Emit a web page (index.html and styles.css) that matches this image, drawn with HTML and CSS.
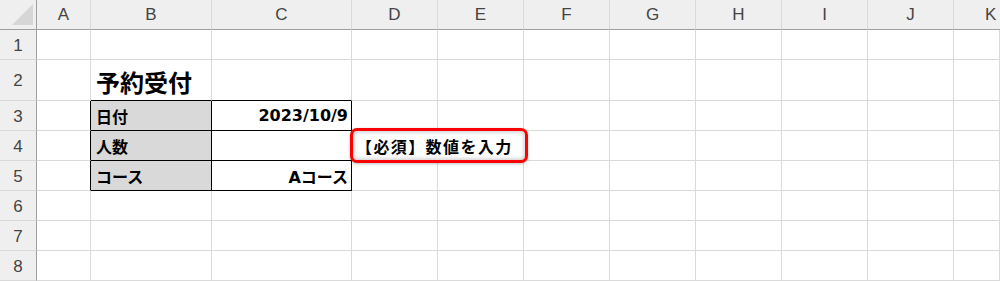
FILE: index.html
```html
<!DOCTYPE html>
<html lang="ja">
<head>
<meta charset="utf-8">
<link rel="stylesheet" href="styles.css">
</head>
<body>
<div class="sheet">
  <div class="corner"><span class="tri"></span></div>
  <div class="ch">A</div><div class="ch">B</div><div class="ch">C</div><div class="ch">D</div><div class="ch">E</div><div class="ch">F</div><div class="ch">G</div><div class="ch">H</div><div class="ch">I</div><div class="ch">J</div><div class="ch last">K</div>

  <div class="rh">1</div>
  <div class="c"></div><div class="c"></div><div class="c"></div><div class="c"></div><div class="c"></div><div class="c"></div><div class="c"></div><div class="c"></div><div class="c"></div><div class="c"></div><div class="c"></div>

  <div class="rh">2</div>
  <div class="c"></div><div class="c bb title">予約受付</div><div class="c bb"></div><div class="c"></div><div class="c"></div><div class="c"></div><div class="c"></div><div class="c"></div><div class="c"></div><div class="c"></div><div class="c"></div>

  <div class="rh">3</div>
  <div class="c br"></div><div class="c label">日付</div><div class="c value">2023/10/9</div><div class="c"></div><div class="c"></div><div class="c"></div><div class="c"></div><div class="c"></div><div class="c"></div><div class="c"></div><div class="c"></div>

  <div class="rh">4</div>
  <div class="c br"></div><div class="c label">人数</div><div class="c value"></div><div class="c"></div><div class="c"></div><div class="c"></div><div class="c"></div><div class="c"></div><div class="c"></div><div class="c"></div><div class="c"></div>

  <div class="rh">5</div>
  <div class="c br"></div><div class="c label">コース</div><div class="c value">Aコース</div><div class="c"></div><div class="c"></div><div class="c"></div><div class="c"></div><div class="c"></div><div class="c"></div><div class="c"></div><div class="c"></div>

  <div class="rh">6</div>
  <div class="c"></div><div class="c"></div><div class="c"></div><div class="c"></div><div class="c"></div><div class="c"></div><div class="c"></div><div class="c"></div><div class="c"></div><div class="c"></div><div class="c"></div>

  <div class="rh">7</div>
  <div class="c"></div><div class="c"></div><div class="c"></div><div class="c"></div><div class="c"></div><div class="c"></div><div class="c"></div><div class="c"></div><div class="c"></div><div class="c"></div><div class="c"></div>

  <div class="rh">8</div>
  <div class="c"></div><div class="c"></div><div class="c"></div><div class="c"></div><div class="c"></div><div class="c"></div><div class="c"></div><div class="c"></div><div class="c"></div><div class="c"></div><div class="c"></div>

  <div class="callout">【必須】数値を入力</div>
</div>
</body>
</html>
```

FILE: styles.css
```css
html, body {
  margin: 0;
  padding: 0;
  background: #ffffff;
  overflow: hidden;
}

.sheet {
  position: relative;
  display: grid;
  grid-template-columns: 37px 54px 121px 140px repeat(7, 86px) 46px;
  grid-template-rows: 30px 30px 41px 30px 30px 30px 30px 30px 30px;
  width: 1000px;
  height: 281px;
  overflow: hidden;
  font-family: "Noto Sans CJK JP", "Noto Sans", sans-serif;
}

.corner {
  position: relative;
  background: #efefef;
  border-right: 1px solid #9f9f9f;
  border-bottom: 1px solid #9f9f9f;
  box-sizing: border-box;
}

.tri {
  position: absolute;
  right: 3px;
  bottom: 4px;
  width: 0;
  height: 0;
  border-left: 21px solid transparent;
  border-bottom: 21px solid #d6d6d6;
}

.ch {
  background: #efefef;
  border-right: 1px solid #d9d9d9;
  border-bottom: 1px solid #9f9f9f;
  box-sizing: border-box;
  display: flex;
  align-items: center;
  justify-content: center;
  font-family: "Liberation Sans", "Noto Sans", sans-serif;
  font-size: 17px;
  color: #444444;
  padding-top: 1px;
}

.ch.last {
  justify-content: flex-start;
  padding-left: 31px;
  border-right: none;
}

.rh {
  background: #efefef;
  border-right: 1px solid #9f9f9f;
  border-bottom: 1px solid #d9d9d9;
  box-sizing: border-box;
  display: flex;
  align-items: center;
  justify-content: center;
  font-family: "Liberation Sans", "Noto Sans", sans-serif;
  font-size: 17px;
  color: #444444;
  padding-top: 2px;
}

.c {
  border-right: 1px solid #dadada;
  border-bottom: 1px solid #dadada;
  box-sizing: border-box;
  display: flex;
  align-items: center;
  font-family: "DejaVu Sans", "Noto Sans CJK JP", sans-serif;
  font-size: 16px;
  font-weight: 700;
  color: #000000;
  white-space: nowrap;
}

.c.bb {
  border-bottom-color: #000000;
}

.c.br {
  border-right-color: #000000;
}

.title {
  font-size: 24px;
  padding-left: 5px;
  padding-top: 2px;
  align-items: center;
}

.label {
  background: #d9d9d9;
  border-right-color: #000000;
  border-bottom-color: #000000;
  padding-left: 5px;
}

.value {
  border-right-color: #000000;
  border-bottom-color: #000000;
  justify-content: flex-end;
  padding-right: 3px;
}

.callout {
  position: absolute;
  left: 350px;
  top: 128px;
  width: 178px;
  height: 35px;
  box-sizing: border-box;
  border: 3px solid #ff0000;
  border-radius: 7px;
  background: #ffffff;
  box-shadow: inset 0 0 4px 1px rgba(0, 0, 0, 0.22), 0 1px 3px rgba(0, 0, 0, 0.25);
  display: flex;
  align-items: center;
  padding-left: 3px;
  font-size: 16px;
  font-weight: 700;
  letter-spacing: 1.4px;
  color: #000000;
  white-space: nowrap;
}
```
